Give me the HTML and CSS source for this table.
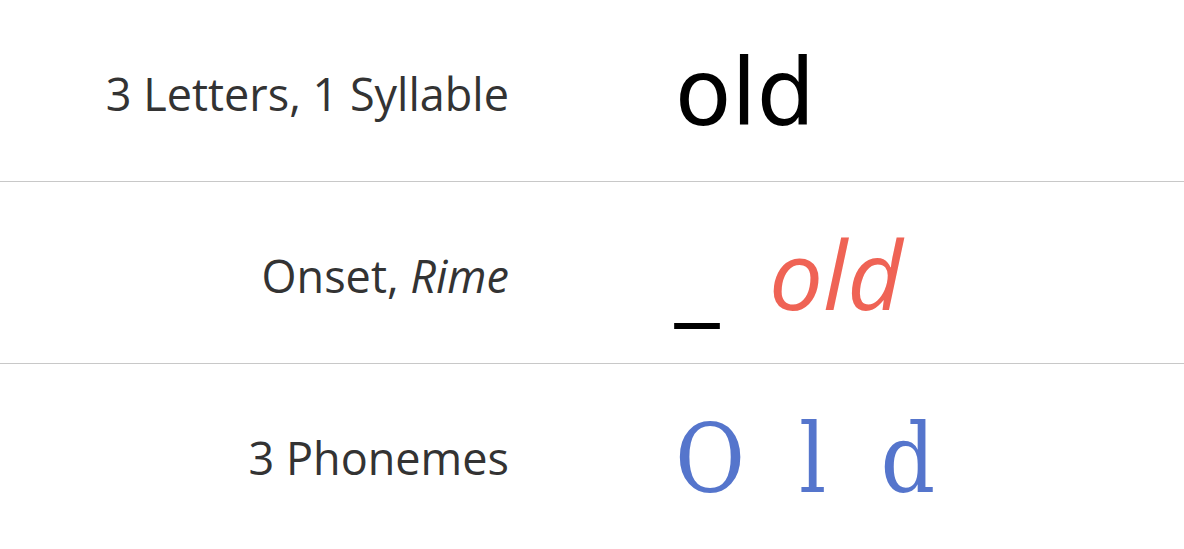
FILE: index.html
```html
<!DOCTYPE html>
<html>
<head>
<meta charset="utf-8">
<link rel="stylesheet" href="styles.css">
</head>
<body>
<div class="table">
  <div class="row">
    <div class="label">3 Letters, 1 Syllable</div>
    <div class="value word">old</div>
  </div>
  <div class="row">
    <div class="label">Onset, <em>Rime</em></div>
    <div class="value"><span class="blank">_</span><span class="rime">old</span></div>
  </div>
  <div class="row">
    <div class="label">3 Phonemes</div>
    <div class="value phonemes"><span>O</span><span>l</span><span>d</span></div>
  </div>
</div>
</body>
</html>
```

FILE: styles.css
```css
html, body {
  margin: 0;
  padding: 0;
  background: #fff;
}
.table {
  display: flex;
  flex-direction: column;
}
.row {
  display: grid;
  grid-template-columns: 509px 1fr;
  column-gap: 166px;
  height: 181px;
  align-items: center;
  border-bottom: 1px solid #c8c8c8;
}
.row:last-child {
  border-bottom: none;
}
.label {
  text-align: right;
  font-family: "Open Sans", sans-serif;
  font-size: 45px;
  color: #333;
  padding-top: 5px;
}
.label em {
  font-style: italic;
}
.value {
  display: flex;
  align-items: baseline;
}
.word {
  font-family: "DejaVu Sans", sans-serif;
  font-size: 92px;
  color: #000;
  padding-top: 6px;
}
.blank {
  font-family: "DejaVu Sans", sans-serif;
  font-size: 88px;
  color: #000;
  margin-right: 50px;
  position: relative;
  top: -2px;
}
.rime {
  font-family: "Open Sans", sans-serif;
  font-style: italic;
  font-size: 96px;
  color: #ef6355;
}
.phonemes {
  font-family: "DejaVu Serif", serif;
  font-stretch: condensed;
  font-size: 95px;
  color: #5575cc;
  gap: 54px;
  padding-top: 8px;
}
```
